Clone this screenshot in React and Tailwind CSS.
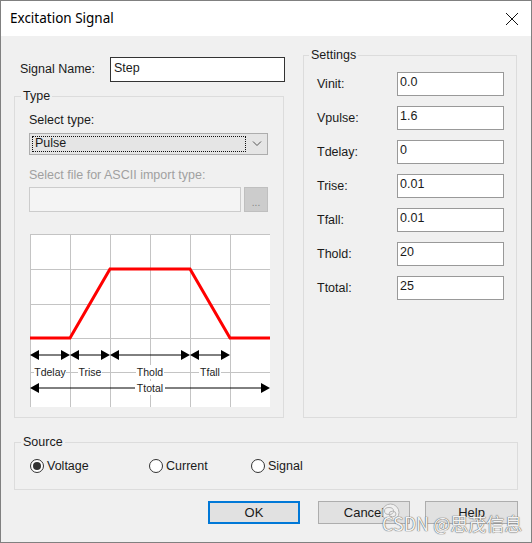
import React from "react";

function Chart() {
  const gx = [0.5, 40.5, 80.5, 120.5, 160.5, 200.5];
  const gy = [0.5, 35.5, 70.5, 104.5, 138.5];
  const arrow = (a, b, y, key) => (
    <g key={key}>
      <line x1={a + 4} y1={y} x2={b - 4} y2={y} stroke="#000" strokeWidth="1" />
      <polygon points={`${a},${y} ${a + 9},${y - 5} ${a + 9},${y + 5}`} fill="#000" />
      <polygon points={`${b},${y} ${b - 9},${y - 5} ${b - 9},${y + 5}`} fill="#000" />
    </g>
  );
  const label = (cx, y, w, t) => (
    <g key={t}>
      <rect x={cx - w / 2} y={y - 7} width={w} height={14} fill="#fff" />
      <text x={cx} y={y + 4} textAnchor="middle" fontSize="10.5" fill="#222" fontFamily="Liberation Sans, Arial, sans-serif">
        {t}
      </text>
    </g>
  );
  return (
    <svg width="240" height="173" viewBox="0 0 240 173" className="block">
      <rect x="0" y="0" width="240" height="173" fill="#fff" />
      {gx.map((x) => (
        <line key={"v" + x} x1={x} y1="0" x2={x} y2="173" stroke="#c4c4c4" strokeWidth="1" />
      ))}
      {gy.map((y) => (
        <line key={"h" + y} x1="0" y1={y} x2="240" y2={y} stroke="#c4c4c4" strokeWidth="1" />
      ))}
      <polyline
        points="0,104 40,104 80,35 160,35 200,104 240,104"
        fill="none"
        stroke="#ff0000"
        strokeWidth="3"
        strokeLinejoin="miter"
      />
      {arrow(0, 40, 121, "a1")}
      {arrow(40, 80, 121, "a2")}
      {arrow(80, 160, 121, "a3")}
      {arrow(160, 200, 121, "a4")}
      {label(20, 138, 32, "Tdelay")}
      {label(60, 138, 24, "Trise")}
      {label(120, 138, 28, "Thold")}
      {label(180, 138, 22, "Tfall")}
      {arrow(0, 240, 154, "a5")}
      {label(120, 154, 30, "Ttotal")}
    </svg>
  );
}

function Field({ label, value }) {
  return (
    <div className="flex items-center h-[24px]">
      <div className="w-[80px]">{label}</div>
      <div className="w-[107px] h-[24px] bg-white border border-[#999999] flex items-center pl-[2px] pb-[3px]">
        {value}
      </div>
    </div>
  );
}

function Radio({ checked, label, width }) {
  return (
    <div className={`flex items-center h-[16px] ${width}`}>
      <div className="w-[14px] h-[14px] rounded-full border border-[#333333] bg-white flex items-center justify-center">
        {checked && <div className="w-[8px] h-[8px] rounded-full bg-[#333333]" />}
      </div>
      <span className="ml-[3px]">{label}</span>
    </div>
  );
}

function Btn({ children, primary, w }) {
  return (
    <div
      className={`h-[23px] ${w} bg-[#e1e1e1] flex items-center justify-center text-[13px] ${
        primary ? "border-2 border-[#0078d7]" : "border border-[#adadad]"
      }`}
    >
      {children}
    </div>
  );
}

export default function App() {
  return (
    <div className="w-[532px] h-[543px] bg-[#f0f0f0] border border-[#808080] flex flex-col relative overflow-hidden font-['Liberation_Sans',Arial,sans-serif] text-[12.5px] text-[#1a1a1a] leading-[15px]">
      {/* title bar */}
      <div className="h-[35px] bg-white flex items-center justify-between pl-[9px] pr-[12px] shrink-0">
        <span className="font-['Noto_Sans',sans-serif] text-[13.5px] text-black">Excitation Signal</span>
        <svg width="14" height="14" viewBox="0 0 14 14">
          <path d="M1 1 L13 13 M13 1 L1 13" stroke="#111" strokeWidth="1" />
        </svg>
      </div>

      {/* body */}
      <div className="flex-1 flex flex-col pt-[12px] pl-[13px]">
        <div className="flex h-[370px]">
          {/* left column */}
          <div className="w-[271px] flex flex-col">
            <div className="flex items-center h-[25px] mt-[9px]">
              <div className="w-[96px] pl-[6px]">Signal Name:</div>
              <div className="w-[175px] h-[25px] bg-white border border-[#333333] flex items-center pl-[3px] pb-[3px]">
                Step
              </div>
            </div>
            <fieldset className="mt-[7px] flex-1 border border-[#dcdcdc] w-[270px]">
              <legend className="ml-[6px] px-[2px] leading-[14px]">Type</legend>
              <div className="flex flex-col pl-[14px]">
                <div className="mt-[10px]">Select type:</div>
                <div className="mt-[5px] w-[239px] h-[22px] bg-[#e5e5e5] border border-[#adadad] flex items-center pl-[2px]">
                  <div className="w-[214px] h-[16px] border border-dotted border-[#111] flex items-center pl-[2px] pb-[1px]">
                    Pulse
                  </div>
                  <div className="flex-1 flex items-center justify-center">
                    <svg width="10" height="6" viewBox="0 0 10 6">
                      <path d="M1 0.5 L5 4.5 L9 0.5" fill="none" stroke="#555" strokeWidth="1" />
                    </svg>
                  </div>
                </div>
                <div className="mt-[13px] text-[#a0a0a0]">Select file for ASCII import type:</div>
                <div className="mt-[4px] flex h-[25px]">
                  <div className="w-[212px] h-[25px] bg-[#f4f4f4] border border-[#cccccc]" />
                  <div className="ml-[3px] w-[24px] h-[25px] bg-[#cccccc] border border-[#bfbfbf] flex items-end justify-center pb-[3px] text-[10px] leading-[10px] text-[#858585]">
                    ...
                  </div>
                </div>
                <div className="mt-[22px] ml-[1px]">
                  <Chart />
                </div>
              </div>
            </fieldset>
          </div>

          {/* settings */}
          <fieldset className="ml-[18px] w-[214px] border border-[#dcdcdc]">
            <legend className="ml-[5px] px-[2px] leading-[14px]">Settings</legend>
            <div className="flex flex-col gap-[10px] pt-[10px] pl-[13px]">
              <Field label="Vinit:" value="0.0" />
              <Field label="Vpulse:" value="1.6" />
              <Field label="Tdelay:" value="0" />
              <Field label="Trise:" value="0.01" />
              <Field label="Tfall:" value="0.01" />
              <Field label="Thold:" value="20" />
              <Field label="Ttotal:" value="25" />
            </div>
          </fieldset>
        </div>

        {/* source */}
        <fieldset className="mt-[17px] w-[504px] border border-[#dcdcdc]">
          <legend className="ml-[6px] px-[2px] leading-[14px]">Source</legend>
          <div className="flex pt-[9px] pb-[15px] pl-[15px]">
            <Radio checked label="Voltage" width="w-[119px]" />
            <Radio label="Current" width="w-[102px]" />
            <Radio label="Signal" width="w-[100px]" />
          </div>
        </fieldset>

        {/* buttons */}
        <div className="mt-[11px] flex w-[504px] justify-end">
          <Btn primary w="w-[92px]">OK</Btn>
          <div className="w-[18px]" />
          <Btn w="w-[92px]">Cancel</Btn>
          <div className="w-[15px]" />
          <Btn w="w-[93px]">Help</Btn>
        </div>
      </div>

      {/* watermark overlay */}
      <svg className="absolute left-[380px] top-[502px]" width="19" height="19" viewBox="0 0 19 19">
        <circle cx="9.5" cy="9.5" r="8.5" fill="rgba(255,255,255,0.5)" stroke="#b5b5b5" strokeWidth="1" />
        <ellipse cx="8" cy="8" rx="4.5" ry="3.5" fill="none" stroke="#b5b5b5" strokeWidth="1" />
        <ellipse cx="11.5" cy="11" rx="3.5" ry="2.8" fill="none" stroke="#b5b5b5" strokeWidth="1" />
      </svg>
      <div className="absolute left-[381px] top-[510px] text-[18px] leading-[24px] font-['Noto_Sans_CJK_SC',sans-serif] text-[#f2f2f2] [text-shadow:0_0_1px_#555,0_0_1px_#555]">
        CSDN @思茂信息
      </div>
    </div>
  );
}
